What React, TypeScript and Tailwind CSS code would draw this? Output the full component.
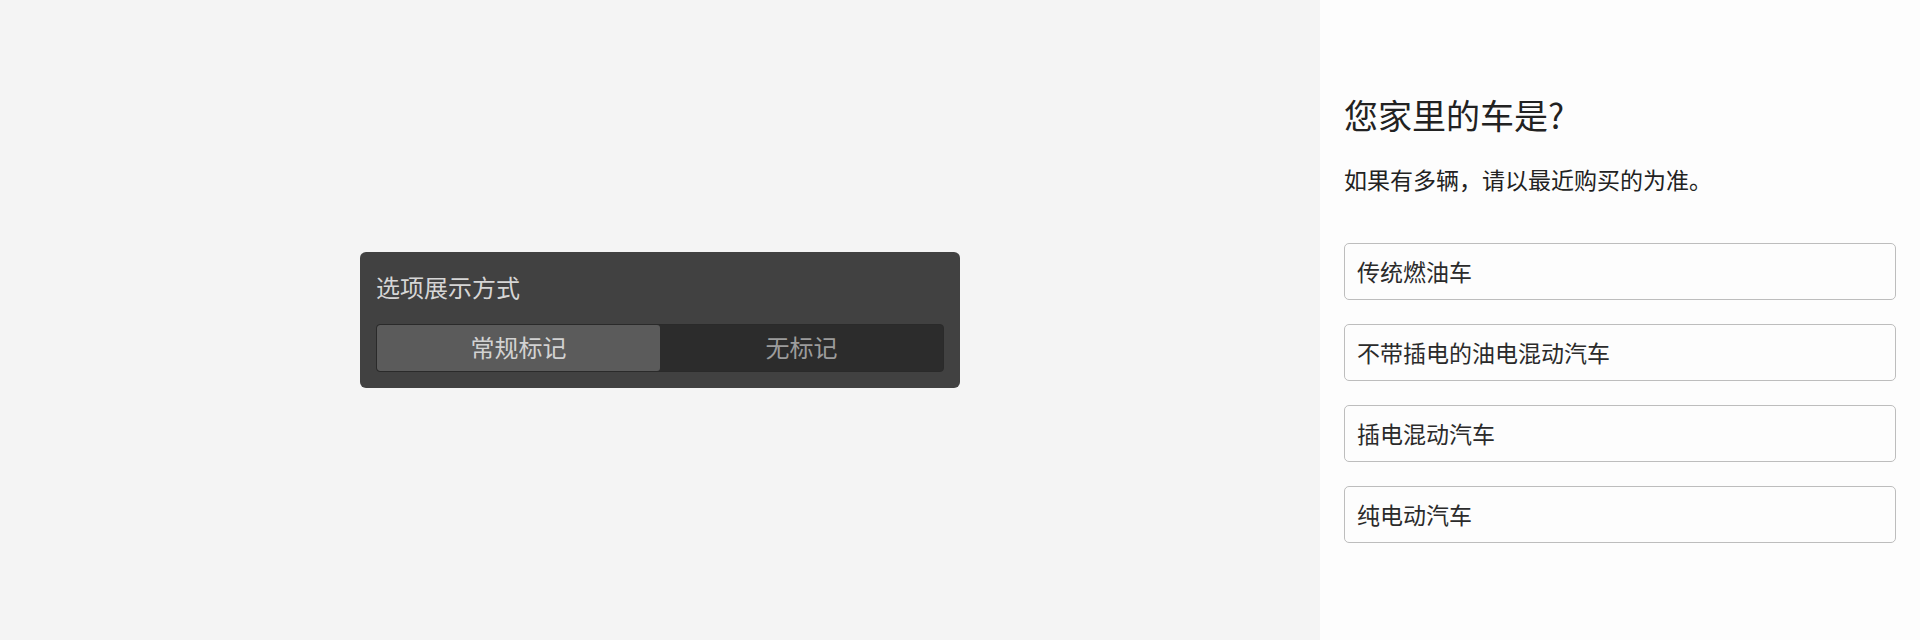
import { useState } from "react";

const FONT = { fontFamily: '"Noto Sans CJK SC", "Noto Sans", sans-serif' };

const OPTIONS = ["传统燃油车", "不带插电的油电混动汽车", "插电混动汽车", "纯电动汽车"];

function DisplayModePanel() {
  const [mode, setMode] = useState(0);
  const modes = ["常规标记", "无标记"];
  return (
    <div className="w-[600px] rounded-[6px] bg-[#414141] px-4 pt-[19px] pb-4">
      <div className="h-8 text-[24px] leading-8 text-[#d6d6d6]">选项展示方式</div>
      <div className="mt-[21px] grid h-12 grid-cols-2 overflow-hidden rounded-[4px] border border-[#2a2a2a] bg-[#2c2c2c]">
        {modes.map((m, i) => (
          <button
            key={m}
            onClick={() => setMode(i)}
            className={[
              "flex items-center justify-center pb-0.5 text-[24px] leading-8",
              mode === i ? "rounded-[3px] bg-[#5b5b5b] text-[#d2d2d2]" : "text-[#9c9c9c]",
            ].join(" ")}
          >
            {m}
          </button>
        ))}
      </div>
    </div>
  );
}

function Question() {
  return (
    <div className="flex w-[600px] shrink-0 flex-col bg-[#fdfdfd] px-6 pt-[95px]">
      <h1 className="text-[34px] leading-[40px] font-normal text-[#222]">您家里的车是?</h1>
      <p className="mt-[28px] text-[23px] leading-8 text-[#222]">如果有多辆，请以最近购买的为准。</p>
      <div className="mt-[48px] flex flex-col gap-6">
        {OPTIONS.map((o) => (
          <div
            key={o}
            className="flex h-[57px] items-center rounded-[5px] border-[1.5px] border-[#bdbdbd] bg-[#fdfdfd] px-3 text-[23px] text-[#2b2b2b]"
          >
            {o}
          </div>
        ))}
      </div>
    </div>
  );
}

export default function App() {
  return (
    <div className="flex h-[640px] w-[1920px] bg-[#f4f4f4]" style={FONT}>
      <div className="flex flex-1 items-center justify-center">
        <DisplayModePanel />
      </div>
      <Question />
    </div>
  );
}
